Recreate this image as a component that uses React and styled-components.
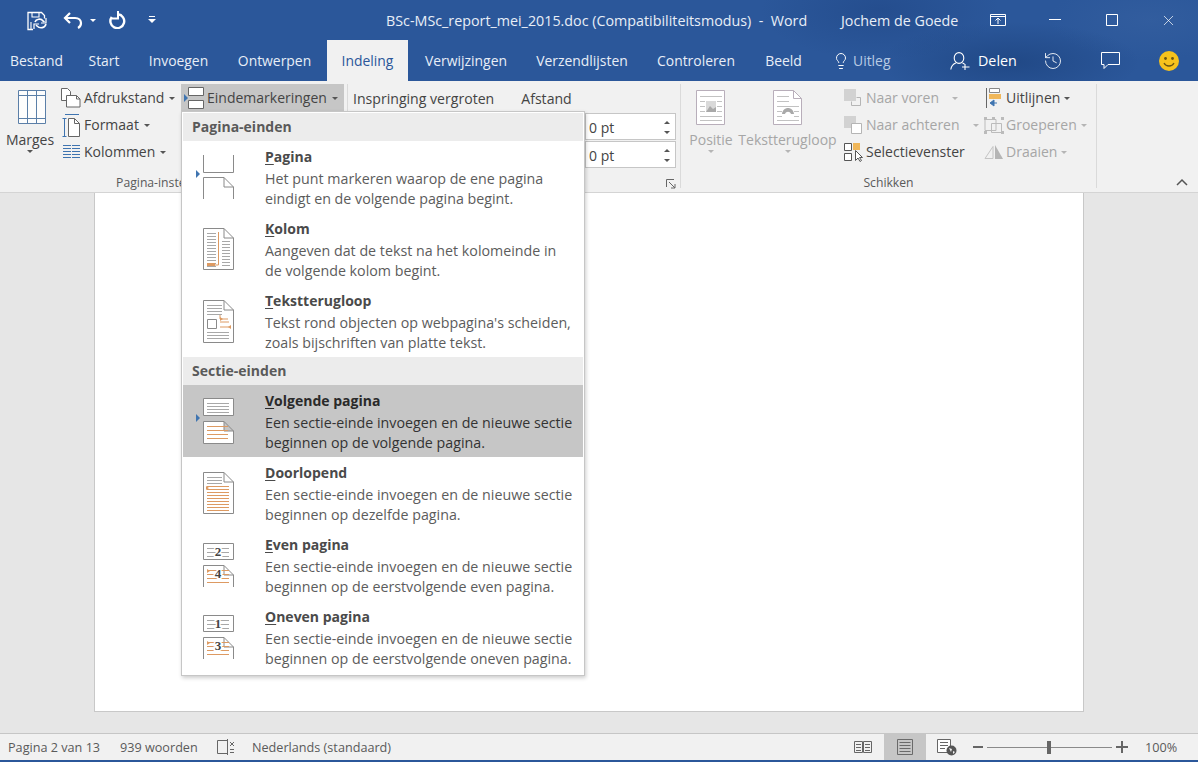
import { History, Lightbulb, X } from 'lucide-react';
import styled, { createGlobalStyle } from 'styled-components';

const GlobalStyle = createGlobalStyle`
  html, body { margin: 0; padding: 0; background: #e6e6e6; }
  body { font-family: "Open Sans", "Noto Sans", "Liberation Sans", sans-serif; }
  * { box-sizing: border-box; }
`;

const Window = styled.div`
  width: 1198px;
  height: 762px;
  display: flex;
  flex-direction: column;
  position: relative;
  overflow: hidden;
  background: #e6e6e6;
  color: #444;
`;

const Header = styled.div`
  background:
    radial-gradient(ellipse 130px 40px at 1010px 62px, rgba(20, 55, 110, .45), transparent),
    radial-gradient(ellipse 120px 50px at 880px 10px, rgba(25, 60, 120, .35), transparent),
    radial-gradient(ellipse 100px 40px at 1150px 20px, rgba(70, 110, 170, .25), transparent),
    #2b579a;
`;

const TitleBar = styled.div`
  height: 40px;
  display: flex;
  align-items: center;
  color: #fff;
`;

const QuickAccess = styled.div`
  width: 386px;
  display: flex;
  align-items: center;
  padding-left: 26px;
`;

const Title = styled.div`
  width: 455px;
  font-size: 14.3px;
  white-space: pre;
  color: #e8eef7;
`;

const UserName = styled.div`
  width: 128px;
  font-size: 14.3px;
  color: #e8eef7;
`;

const WinButton = styled.div`
  width: 57px;
  display: flex;
  justify-content: center;
  align-items: center;
`;

const TabBar = styled.div`
  height: 41px;
  display: flex;
  align-items: stretch;
`;

const Tab = styled.div`
  display: flex;
  align-items: center;
  font-size: 13.9px;
  width: ${(p) => p.$w}px;
  justify-content: center;
  background: ${(p) => (p.$active ? '#f1f1f1' : 'transparent')};
  color: ${(p) => (p.$active ? '#2b579a' : '#e8eef7')};
`;

const TellMe = styled.div`
  margin-left: 17px;
  width: 118px;
  display: flex;
  align-items: center;
  gap: 3px;
  font-size: 13.9px;
  color: #b9cbe4;
`;

const Share = styled.div`
  width: 74px;
  display: flex;
  align-items: center;
  gap: 8px;
  font-size: 14.3px;
  color: #fff;
`;

const TabIcon = styled.div`
  width: 58px;
  display: flex;
  align-items: center;
  justify-content: center;
  color: #f2f5fa;
`;

const Ribbon = styled.div`
  height: 112px;
  display: flex;
  background: #f1f1f1;
  border-bottom: 1px solid #d4d4d4;
  position: relative;
`;

const Group = styled.div`
  width: ${(p) => p.$w}px;
  display: flex;
  flex-direction: column;
  border-right: 1px solid #dadada;
  margin: 3px 0 4px;
`;

const GroupBody = styled.div`
  height: 91px;
  flex: none;
  display: flex;
`;

const GroupLabel = styled.div`
  height: 15px;
  flex: none;
  font-size: 12.2px;
  line-height: 15px;
  text-align: center;
  color: #5a5a5a;
  padding-right: ${(p) => p.$shift || 0}px;
  position: relative;
`;

const BigButton = styled.div`
  width: ${(p) => p.$w}px;
  display: flex;
  flex-direction: column;
  align-items: center;
  font-size: 14px;
  padding-top: 6px;
  color: ${(p) => (p.$disabled ? '#a6a6a6' : '#444')};
`;

const BigLabel = styled.div`
  margin-top: ${(p) => p.$gap}px;
  line-height: 18px;
  white-space: nowrap;
`;

const Stack = styled.div`
  width: ${(p) => p.$w}px;
  display: flex;
  flex-direction: column;
`;

const SmallButton = styled.div`
  height: 27px;
  display: flex;
  align-items: center;
  gap: ${(p) => p.$gap ?? 3}px;
  font-size: 14px;
  white-space: nowrap;
  padding-left: ${(p) => p.$pad || 0}px;
  background: ${(p) => (p.$hover ? '#c6c6c6' : 'transparent')};
  color: ${(p) => (p.$disabled ? '#a6a6a6' : '#444')};
`;

const IconBox = styled.span`
  width: 20px;
  display: flex;
  justify-content: center;
`;

const Caret = styled.span`
  width: 0;
  height: 0;
  margin: 1px 0 0 ${(p) => p.$gap ?? 2}px;
  border-left: 3px solid transparent;
  border-right: 3px solid transparent;
  border-top: 3px solid ${(p) => (p.$disabled ? '#b5b5b5' : p.$light ? '#fff' : '#555')};
`;

const ParagraphRow = styled.div`
  height: 27px;
  display: flex;
  align-items: center;
  font-size: 14.1px;
  padding: 2px 0 0 5px;
  gap: 27px;
  white-space: nowrap;
`;

const Spinners = styled.div`
  margin: 2px 0 0 237px;
  display: flex;
  flex-direction: column;
  gap: 1px;
`;

const Spinner = styled.div`
  width: 91px;
  height: 27px;
  background: #fff;
  border: 1px solid #c6c6c6;
  display: flex;
  align-items: center;
  justify-content: space-between;
  padding: 1px 5px 0 3px;
  font-size: 14px;
`;

const SpinArrows = styled.div`
  display: flex;
  flex-direction: column;
  gap: 7px;
`;

const SpinArrow = styled.span`
  width: 0;
  height: 0;
  border-left: 3px solid transparent;
  border-right: 3px solid transparent;
  border-top: ${(p) => (p.$up ? 'none' : '3px solid #555')};
  border-bottom: ${(p) => (p.$up ? '3px solid #555' : 'none')};
`;

const Launcher = styled.svg`
  position: absolute;
  right: 4px;
  top: 4px;
`;

const Collapse = styled.svg`
  position: absolute;
  left: 1176px;
  top: 97px;
`;

const DocArea = styled.div`
  flex: 1;
  padding: 0 114px 21px 94px;
  display: flex;
`;

const Sheet = styled.div`
  flex: 1;
  background: #fff;
  border: 1px solid #c8c8c8;
  border-top: none;
`;

const StatusBar = styled.div`
  height: 29px;
  display: flex;
  align-items: stretch;
  background: #f1f1f1;
  border-top: 1px solid #c6c6c6;
  border-bottom: 2px solid #2b579a;
  font-size: 12.65px;
  color: #5a5a5a;
`;

const StatusText = styled.div`
  display: flex;
  align-items: center;
  width: ${(p) => p.$w}px;
  flex: none;
  white-space: nowrap;
`;

const ViewButton = styled.div`
  width: ${(p) => p.$w}px;
  flex: none;
  display: flex;
  align-items: center;
  justify-content: center;
  background: ${(p) => (p.$active ? '#c6c6c6' : 'transparent')};
`;

const Zoom = styled.div`
  flex: none;
  display: flex;
  align-items: center;
  margin-left: 5px;
`;

const ZoomTrack = styled.div`
  width: 125px;
  height: 1px;
  background: #8a8a8a;
  margin: 0 4px;
  position: relative;
`;

const ZoomThumb = styled.div`
  position: absolute;
  left: 60px;
  top: -6px;
  width: 4px;
  height: 13px;
  background: #666;
`;

const Menu = styled.div`
  position: absolute;
  left: 181px;
  top: 111px;
  width: 404px;
  height: 565px;
  background: #fff;
  border: 1px solid #c6c6c6;
  box-shadow: 1px 2px 4px rgba(0, 0, 0, .2);
  padding: 1px;
  z-index: 10;
`;

const MenuHeader = styled.div`
  height: ${(p) => p.$h}px;
  background: #ececec;
  display: flex;
  align-items: center;
  padding: 0 0 2px 9px;
  font-size: 14px;
  font-weight: 700;
  color: #5a5a5a;
`;

const MenuItem = styled.div`
  height: 72px;
  display: flex;
  padding: 12px 0 0 12px;
  background: ${(p) => (p.$active ? '#c6c6c6' : 'transparent')};
  color: ${(p) => (p.$active ? '#333' : '#5c5c5c')};
`;

const ItemText = styled.div`
  margin: -6px 0 0 28px;
  font-size: 14.25px;
  line-height: 20px;
  white-space: nowrap;
`;

const ItemTitle = styled.div`
  font-size: 14px;
  font-weight: 700;
  margin-bottom: 2px;
  color: ${(p) => (p.$active ? '#2a2a2a' : '#4a4a4a')};
  u { text-underline-offset: 2px; }
`;

const SmallGap = styled.span`
  display: inline-block;
  width: ${(p) => p.$w}px;
`;

const GRAY = '#8a8a8a';
const LINE = '#a8a8a8';
const ORANGE = '#dd9a62';
const BLUE = '#3f74b0';

const Marker = ({ y }) => <path d={`M1 ${y - 4}l4 4-4 4z`} fill={BLUE} />;

const Lines = ({ ys, x1 = 12, x2 = 34, color = LINE }) => (
  <path d={ys.map((y) => `M${x1} ${y + .5}H${x2}`).join('')} stroke={color} fill="none" />
);

const Page = ({ y1, y2, fill = '#fff' }) => (
  <path d={`M8.500 ${y1 + .5}H29l9.500 9.500V${y2 + .5}H8.500z M29 ${y1 + .5}v9.500h9.500`} fill={fill} stroke={GRAY} />
);

const MenuSvg = ({ children }) => (
  <svg width="42" height="48" viewBox="0 0 42 48">{children}</svg>
);

const Num = ({ y, x = 23, halo = '#fff', children }) => (
  <text x={x} y={y} textAnchor="middle" fontSize="13" fontWeight="700" fill="#444" fontFamily="Liberation Serif, serif" stroke={halo} strokeWidth="3" paintOrder="stroke">{children}</text>
);

const PaginaIcon = () => (
  <MenuSvg>
    <path d="M8.500 2v17.500h30V2" fill="none" stroke={GRAY} />
    <path d="M8.500 46V24.500H29l9.500 9.500V46M29 24.500v9.500h9.500" fill="none" stroke={GRAY} />
    <Marker y={21} />
  </MenuSvg>
);

const KolomIcon = () => (
  <MenuSvg>
    <Page y1={3} y2={44} />
    <Lines ys={[8, 11, 14, 17, 20, 23, 26, 29, 32, 35, 38, 41]} x1={12} x2={21} />
    <Lines ys={[16, 19, 22, 25, 28, 31, 34, 37, 40]} x1={27} x2={35} />
    <path d="M23.500 7v33H14" fill="none" stroke={ORANGE} />
    <path d="M12 38h8v3h-8z" fill={ORANGE} />
  </MenuSvg>
);

const WrapIcon = () => (
  <MenuSvg>
    <Page y1={3} y2={45} />
    <Lines ys={[8, 11, 14, 17]} x2={27} />
    <path d="M12.500 22.500h9v9h-9z" fill="#fff" stroke={GRAY} />
    <Lines ys={[35, 38, 41]} />
    <path d="M25 18v4h8M25 25h9M25 30h9" fill="none" stroke={ORANGE} />
    <path d="M25 20l3 2-3 2zM36 28l-3 2 3 2z" fill={ORANGE} />
  </MenuSvg>
);

const NextIcon = () => (
  <MenuSvg>
    <path d="M8.500 1.500h30v17h-30z" fill="#fff" stroke={GRAY} />
    <Lines ys={[6, 9, 12, 15]} />
    <Page y1={24} y2={46} />
    <Lines ys={[29, 33, 37, 41]} color={ORANGE} x2={33} />
    <Marker y={21} />
  </MenuSvg>
);

const ContinuousIcon = () => (
  <MenuSvg>
    <Page y1={3} y2={44} />
    <Lines ys={[8, 11, 14]} x2={27} />
    <Lines ys={[17, 20, 23, 26, 29, 32, 35, 38, 41]} color={ORANGE} />
    <path d="M11 17l3 2-3 2z" fill={ORANGE} />
  </MenuSvg>
);

const NumberedIcon = ({ top, bottom }) => (
  <MenuSvg>
    <path d="M8.500 2.500h30v16h-30z" fill="#fff" stroke={GRAY} />
    <Lines ys={[7, 11, 15]} />
    <Num y={15}>{top}</Num>
    <path d="M8.500 46V24.500H29l9.500 9.500V46M29 24.500v9.500h9.500" fill="none" stroke={GRAY} />
    <Lines ys={[29, 33, 37, 41]} color={ORANGE} x2={34} />
    <path d="M12 28l3 2-3 2z" fill={ORANGE} />
    <Num y={37}>{bottom}</Num>
  </MenuSvg>
);

const MargesIcon = () => (
  <svg width="32" height="34" viewBox="-4 0 32 34">
    <path d="M.5.500h27v33H.5z" fill="#fdfdfd" stroke="#5b7fa8" />
    <path d="M9.500 .5v33M18.500 .5v33M.5 5.500h27M.5 28.500h27" stroke="#5b7fa8" fill="none" />
  </svg>
);

const OrientationIcon = () => (
  <svg width="20" height="20" viewBox="0 0 20 20">
    <path d="M.5.500h6l3 3v9h-9z" fill="#fff" stroke="#666" />
    <path d="M5.500 7.500h10l3.500 3.500v8H5.500z" fill="#fff" stroke="#666" />
    <path d="M15.500 7.500v3.500h3.500" fill="none" stroke="#666" />
  </svg>
);

const SizeIcon = () => (
  <svg width="20" height="24" viewBox="0 0 20 24">
    <path d="M7.500 5.500h6l5 5v13h-11z" fill="#fff" stroke="#666" />
    <path d="M13.500 5.500v5h5" fill="none" stroke="#666" />
    <path d="M4 1.500h14M3.500 5v18M1.500 5.500h4M1.500 23.500h4" stroke={BLUE} fill="none" />
  </svg>
);

const ColumnsIcon = () => (
  <svg width="20" height="16" viewBox="0 0 20 16">
    <path d="M2 1.500h8M2 4.500h8M2 7.500h8M2 10.500h8M2 13.500h8M11 1.500h8M11 4.500h8M11 7.500h8M11 10.500h8M11 13.500h8" stroke={BLUE} fill="none" />
  </svg>
);

const BreaksIcon = () => (
  <svg width="21" height="22" viewBox="0 0 21 22">
    <path d="M5.500 .5h15v8h-15zM5.500 13.500h15v8h-15z" fill="#fff" stroke="#666" />
    <path d="M1 7l4 4-4 4z" fill={BLUE} />
  </svg>
);

const PositionIcon = () => (
  <svg width="30" height="36" viewBox="0 0 30 36">
    <path d="M.5.500h28v34H.5z" fill="#fff" stroke="#b8aeba" />
    <path d="M4 6.500h22M4 11.500h5M4 16.500h5M4 21.500h5M21 11.500h5M21 16.500h5M21 21.500h5M4 26.500h22M4 30.500h22" stroke="#c2c2c2" fill="none" />
    <path d="M10 11h10v11H10z" fill="#d9d9d9" />
    <path d="M10 22l4-6 3 3 3-2v5z" fill="#a9a9a9" />
  </svg>
);

const WrapBigIcon = () => (
  <svg width="30" height="36" viewBox="0 0 30 36">
    <path d="M.5.500h20l8 8v26H.5z" fill="#fff" stroke="#b8aeba" />
    <path d="M20.500 .5v8h8" stroke="#b8aeba" fill="none" />
    <path d="M4 6.500h12M4 11.500h12M4 16.500h22M4 21.500h5M21 21.500h5M4 26.500h5M21 26.500h5M4 30.500h22" stroke="#c2c2c2" fill="none" />
    <path d="M9 24c1-8 11-8 12 0h-3c-1-3-5-3-6 0z" fill="#a9a9a9" />
  </svg>
);

const ForwardIcon = ({ back }) => (
  <svg width="19" height="18" viewBox="0 0 19 18">
    <path d="M0 0h12v12H0z" fill="#d2d2d2" />
    <path d={back ? 'M7.500 7.500h10v10h-10z' : 'M12.500 8.500h4v8h-9v-4'} fill={back ? '#fff' : 'none'} stroke="#b5b5b5" />
  </svg>
);

const SelectionIcon = () => (
  <svg width="19" height="20" viewBox="0 0 19 20">
    <path d="M.5 1.500h7v7h-7zM.5 11.500h7v7h-7z" fill="#fff" stroke="#555" />
    <path d="M9 1h7v7H9z" fill="#f0b75a" />
    <path d="M11.500 8.500v10l2.500-2.500 2 3.500 1.500-1-2-3h3z" fill="#fff" stroke="#555" />
  </svg>
);

const AlignIcon = () => (
  <svg width="16" height="20" viewBox="0 0 16 20">
    <path d="M.5 0v20" stroke="#666" />
    <path d="M3.500 .5h10v4h-10z" fill="#fff" stroke="#888" />
    <path d="M3 6h12v5H3z" fill="#f0b75a" />
    <path d="M11 15H5M8 12l-4 3 4 3z" fill={BLUE} stroke={BLUE} />
  </svg>
);

const GroupIcon = () => (
  <svg width="20" height="20" viewBox="0 0 20 20">
    <path d="M1 4.500h11v11H1zM7.500 8.500h10v9h-10z" fill="none" stroke="#bbb" />
    <path d="M0 2h3v3H0zM17 2h3v3h-3zM0 16h3v3H0zM17 16h3v3h-3zM8 2h3v2H8z" fill="#bbb" />
  </svg>
);

const RotateIcon = () => (
  <svg width="20" height="16" viewBox="0 0 20 16">
    <path d="M11 1l8 14h-8z" fill="#b5b5b5" />
    <path d="M9 2.500L1 14.500h8z" fill="none" stroke="#c4c4c4" />
  </svg>
);

const SyncSaveIcon = () => (
  <svg width="22" height="22" viewBox="0 0 22 22" fill="none" stroke="#fff">
    <path d="M7 20.500H2V3.500h13.500l3 3v3" strokeWidth="1.300" />
    <path d="M6 4v4h7V4M5 13v7" strokeWidth="1.100" />
    <path d="M9 13c1-3 6-4 8-1l1.500 1M20 15c-1 4-6 5-9 2l-1-1" strokeWidth="1.600" />
    <path d="M20 9v5h-5M8 20v-5h5" strokeWidth="1.200" />
  </svg>
);

const UndoIcon = () => (
  <svg width="20" height="18" viewBox="0 0 20 18" fill="none" stroke="#fff" strokeWidth="2.200">
    <path d="M7 2L2 7l5 5M2 7h10c4 0 6 2.500 6 5s-1 4-3 5" />
  </svg>
);

const RedoIcon = () => (
  <svg width="18" height="18" viewBox="0 0 18 18" fill="none" stroke="#fff" strokeWidth="2.400">
    <path d="M10 3.300a6.900 6.900 0 1 1-6.200 2.700" />
    <path d="M10 0v7.500H4" strokeWidth="2" />
  </svg>
);

const CustomizeIcon = () => (
  <svg width="8" height="10" viewBox="0 0 8 10" fill="#fff">
    <path d="M1 1h6v1H1zM0 4h8L4 8z" />
  </svg>
);

const ShareIcon = () => (
  <svg width="20" height="18" viewBox="0 0 20 18" fill="none" stroke="#fff" strokeWidth="1.100">
    <ellipse cx="9" cy="6" rx="4.800" ry="5.400" />
    <path d="M.8 17.500c.5-3.500 2.500-5.500 5-6.500M12.500 11c.8.300 1.500.7 2 1.200M15 12v6M12 15h7.500" />
  </svg>
);

const Smiley = () => (
  <svg width="22" height="22" viewBox="0 0 22 22">
    <circle cx="11" cy="11" r="10" fill="#f6c21c" />
    <circle cx="7.500" cy="8.500" r="1.400" fill="#6b5510" />
    <circle cx="14.500" cy="8.500" r="1.400" fill="#6b5510" />
    <path d="M6 13c2 4 8 4 10 0" stroke="#6b5510" fill="none" strokeWidth="1.300" />
  </svg>
);

const ReadIcon = () => (
  <svg width="18" height="14" viewBox="0 0 18 14" fill="none" stroke="#666">
    <path d="M.5 1.500h8v11h-8zM9.500 1.500h8v11h-8zM2 4.500h5M2 7.500h5M2 10.500h5M11 4.500h5M11 7.500h5M11 10.500h5" />
  </svg>
);

const LayoutIcon = () => (
  <svg width="16" height="16" viewBox="0 0 16 16" fill="none" stroke="#6a6a6a">
    <path d="M.5.500h15v15H.5zM2.500 3.500h11M2.500 6.500h11M2.500 9.500h11M2.500 12.500h11" />
  </svg>
);

const WebIcon = () => (
  <svg width="20" height="17" viewBox="0 0 20 17">
    <path d="M.5.500h13v13H.5zM3 3.500h8M3 6.500h8M3 9.500h5" fill="#fff" stroke="#666" />
    <circle cx="14.500" cy="11.500" r="5" fill="#555" />
    <path d="M12 9l3 1-1 3zM16 12l2 1-2 2z" fill="#f1f1f1" />
  </svg>
);

const ProofIcon = () => (
  <svg width="18" height="16" viewBox="0 0 18 16" fill="none" stroke="#666">
    <path d="M10.500 1.500H.5v13h10M10.500 0v16M13 3l4 4M17 3l-4 4M13 10.500h4M13 13.500h4" />
  </svg>
);

const breakItems = [
  { key: 'P', rest: 'agina', icon: <PaginaIcon />, lines: ['Het punt markeren waarop de ene pagina', 'eindigt en de volgende pagina begint.'] },
  { key: 'K', rest: 'olom', icon: <KolomIcon />, lines: ['Aangeven dat de tekst na het kolomeinde in', 'de volgende kolom begint.'] },
  { key: 'T', rest: 'ekstterugloop', icon: <WrapIcon />, lines: ["Tekst rond objecten op webpagina's scheiden,", 'zoals bijschriften van platte tekst.'] },
];

const sectionItems = [
  { key: 'V', rest: 'olgende pagina', icon: <NextIcon />, active: true, lines: ['Een sectie-einde invoegen en de nieuwe sectie', 'beginnen op de volgende pagina.'] },
  { key: 'D', rest: 'oorlopend', icon: <ContinuousIcon />, lines: ['Een sectie-einde invoegen en de nieuwe sectie', 'beginnen op dezelfde pagina.'] },
  { key: 'E', rest: 'ven pagina', icon: <NumberedIcon top="2" bottom="4" />, lines: ['Een sectie-einde invoegen en de nieuwe sectie', 'beginnen op de eerstvolgende even pagina.'] },
  { key: 'O', rest: 'neven pagina', icon: <NumberedIcon top="1" bottom="3" />, lines: ['Een sectie-einde invoegen en de nieuwe sectie', 'beginnen op de eerstvolgende oneven pagina.'] },
];

const tabs = [
  ['Bestand', 73], ['Start', 62], ['Invoegen', 87], ['Ontwerpen', 105], ['Indeling', 81, true],
  ['Verwijzingen', 116], ['Verzendlijsten', 116], ['Controleren', 112], ['Beeld', 63],
];

function BreakRow({ item }) {
  return (
    <MenuItem $active={item.active}>
      {item.icon}
      <ItemText>
        <ItemTitle $active={item.active}><u>{item.key}</u>{item.rest}</ItemTitle>
        {item.lines.map((line) => <div key={line}>{line}</div>)}
      </ItemText>
    </MenuItem>
  );
}

export default function App() {
  return (
    <Window>
      <GlobalStyle />
      <Header>
        <TitleBar>
          <QuickAccess>
            <SyncSaveIcon />
            <SmallGap $w={15} />
            <UndoIcon />
            <Caret $light $gap={7} />
            <SmallGap $w={12} />
            <RedoIcon />
            <SmallGap $w={22} />
            <CustomizeIcon />
          </QuickAccess>
          <Title>BSc-MSc_report_mei_2015.doc (Compatibiliteitsmodus)  -  Word</Title>
          <UserName>Jochem de Goede</UserName>
          <WinButton>
            <svg width="16" height="12" viewBox="0 0 16 12" fill="none" stroke="#fff"><path d="M.5.500h15v11H.5zM.5 2.500h15M8 10V4M5.500 6.500L8 4l2.500 2.500" /></svg>
          </WinButton>
          <WinButton><svg width="12" height="2" viewBox="0 0 12 2"><path d="M0 .5h12" stroke="#fff" /></svg></WinButton>
          <WinButton><svg width="12" height="12" viewBox="0 0 12 12"><path d="M.5.500h11v11H.5z" stroke="#fff" fill="none" /></svg></WinButton>
          <WinButton><X size={17} color="#fff" strokeWidth={1} /></WinButton>
        </TitleBar>
        <TabBar>
          {tabs.map(([label, w, active]) => <Tab key={label} $w={w} $active={active}>{label}</Tab>)}
          <TellMe><Lightbulb size={18} strokeWidth={1.3} color="#fff" />Uitleg</TellMe>
          <Share><ShareIcon />Delen</Share>
          <TabIcon><History size={20} strokeWidth={1.1} /></TabIcon>
          <TabIcon>
            <svg width="20" height="18" viewBox="0 0 20 18" fill="none" stroke="#fff"><path d="M.5.500h18v12H7l-4 4v-4H.5z" /></svg>
          </TabIcon>
          <TabIcon><Smiley /></TabIcon>
        </TabBar>
      </Header>

      <Ribbon>
        <Group $w={348}>
          <GroupBody>
            <BigButton $w={60}>
              <MargesIcon />
              <BigLabel $gap={7}>Marges</BigLabel>
              <Caret $gap={0} />
            </BigButton>
            <Stack $w={121}>
              <SmallButton $pad={1}><OrientationIcon />Afdrukstand<Caret /></SmallButton>
              <SmallButton $pad={1}><SizeIcon />Formaat<Caret /></SmallButton>
              <SmallButton $pad={1}><ColumnsIcon />Kolommen<Caret /></SmallButton>
            </Stack>
            <Stack $w={163}>
              <SmallButton $hover $pad={2}><BreaksIcon />Eindemarkeringen<Caret /></SmallButton>
            </Stack>
          </GroupBody>
          <GroupLabel $shift={22}>Pagina-instelling</GroupLabel>
        </Group>
        <Group $w={333}>
          <GroupBody>
            <div>
              <ParagraphRow><span>Inspringing vergroten</span><span>Afstand</span></ParagraphRow>
              <Spinners>
                <Spinner>0 pt<SpinArrows><SpinArrow $up /><SpinArrow /></SpinArrows></Spinner>
                <Spinner>0 pt<SpinArrows><SpinArrow $up /><SpinArrow /></SpinArrows></Spinner>
              </Spinners>
            </div>
          </GroupBody>
          <GroupLabel>
            <Launcher width="10" height="10" viewBox="0 0 10 10" fill="none" stroke="#666">
              <path d="M.5 8V.5H8M3 3l6 6M9 5v4H5" />
            </Launcher>
          </GroupLabel>
        </Group>
        <Group $w={416}>
          <GroupBody>
            <BigButton $w={60} $disabled>
              <PositionIcon />
              <BigLabel $gap={5}>Positie</BigLabel>
              <Caret $disabled $gap={0} />
            </BigButton>
            <BigButton $w={93} $disabled>
              <WrapBigIcon />
              <BigLabel $gap={5}>Tekstterugloop</BigLabel>
              <Caret $disabled $gap={0} />
            </BigButton>
            <Stack $w={150}>
              <SmallButton $disabled $pad={10}><ForwardIcon />Naar voren<Caret $disabled $gap={10} /></SmallButton>
              <SmallButton $disabled $pad={10}><ForwardIcon back />Naar achteren<Caret $disabled $gap={10} /></SmallButton>
              <SmallButton $pad={10}><SelectionIcon />Selectievenster</SmallButton>
            </Stack>
            <Stack $w={112}>
              <SmallButton $gap={2}><IconBox><AlignIcon /></IconBox>Uitlijnen<Caret /></SmallButton>
              <SmallButton $gap={2} $disabled><IconBox><GroupIcon /></IconBox>Groeperen<Caret $disabled /></SmallButton>
              <SmallButton $gap={2} $disabled><IconBox><RotateIcon /></IconBox>Draaien<Caret $disabled /></SmallButton>
            </Stack>
          </GroupBody>
          <GroupLabel>Schikken</GroupLabel>
        </Group>
        <Collapse width="12" height="8" viewBox="0 0 12 8" fill="none" stroke="#555" strokeWidth="1.500">
          <path d="M1 7l5-5 5 5" />
        </Collapse>
      </Ribbon>

      <DocArea><Sheet /></DocArea>

      <StatusBar>
        <SmallGap $w={8} />
        <StatusText $w={112}>Pagina 2 van 13</StatusText>
        <StatusText $w={97}>939 woorden</StatusText>
        <StatusText $w={35}><ProofIcon /></StatusText>
        <StatusText $w={589}>Nederlands (standaard)</StatusText>
        <ViewButton $w={43}><ReadIcon /></ViewButton>
        <ViewButton $w={42} $active><LayoutIcon /></ViewButton>
        <ViewButton $w={42}><WebIcon /></ViewButton>
        <Zoom>
          <svg width="10" height="2" viewBox="0 0 10 2"><path d="M0 0h10v2H0z" fill="#666" /></svg>
          <ZoomTrack><ZoomThumb /></ZoomTrack>
          <svg width="12" height="12" viewBox="0 0 12 12"><path d="M5 0h2v5h5v2H7v5H5V7H0V5h5z" fill="#666" /></svg>
          <SmallGap $w={17} />
          100%
        </Zoom>
      </StatusBar>

      <Menu>
        <MenuHeader $h={28}>Pagina-einden</MenuHeader>
        {breakItems.map((item) => <BreakRow key={item.key} item={item} />)}
        <MenuHeader $h={28}>Sectie-einden</MenuHeader>
        {sectionItems.map((item) => <BreakRow key={item.key} item={item} />)}
      </Menu>
    </Window>
  );
}
